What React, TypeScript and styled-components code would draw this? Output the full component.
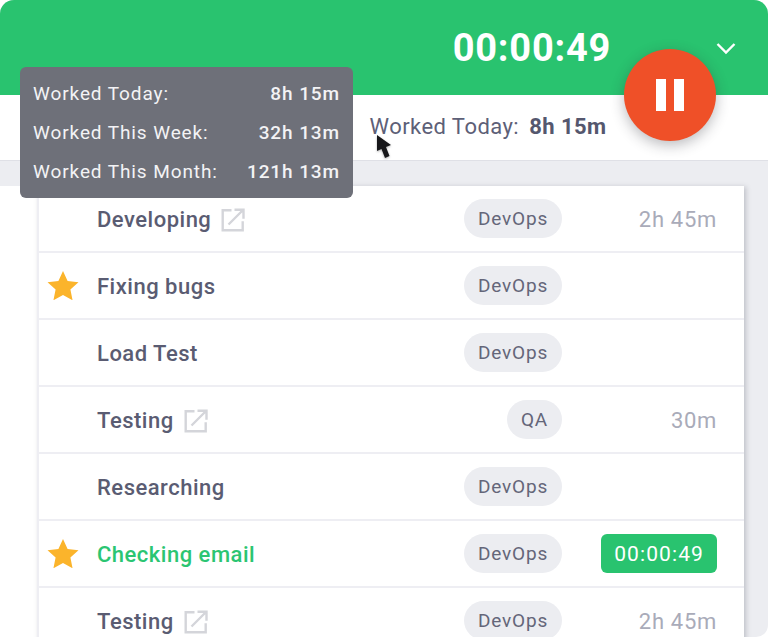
import React from "react";
import styled, { createGlobalStyle } from "styled-components";

const GlobalStyle = createGlobalStyle`
	html, body {
		margin: 0;
		padding: 0;
		background: #fff;
	}
	* {
		box-sizing: border-box;
	}
`;

const Frame = styled.div`
	position: relative;
	width: 768px;
	height: 637px;
	overflow: hidden;
	background: #ecedf1;
	border-radius: 14px 14px 12px 0;
	font-family: Roboto, "Liberation Sans", sans-serif;
	color: #5a5c72;
`;

const Header = styled.header`
	display: flex;
	justify-content: flex-end;
	align-items: flex-start;
	height: 95px;
	padding: 26px 32px 0 0;
	background: #29c36f;
`;

const Clock = styled.div`
	font-size: 38px;
	line-height: 44px;
	font-weight: 700;
	letter-spacing: 0.75px;
	color: #fff;
	margin-right: 105px;
`;

const Chevron = styled.svg`
	width: 20px;
	height: 14px;
	margin-top: 15px;
`;

const SubBar = styled.div`
	height: 66px;
	padding: 18px 0 0 369.500px;
	background: #fff;
	border-bottom: 1px solid #dfe0e6;
	font-size: 22px;
	line-height: 28px;
	letter-spacing: 0.45px;
	color: #5d6077;
`;

const SubValue = styled.b`
	font-weight: 700;
	margin-left: 10px;
	color: #55576e;
`;

const Content = styled.div`
	display: flex;
	margin-top: 25px;
	height: 500px;
`;

const Gutter = styled.div`
	width: 37px;
	background: #fff;
`;

const List = styled.div`
	width: 707px;
	background: #fff;
	border-left: 2px solid #eeeef3;
	box-shadow: 2px 1px 5px rgba(60, 62, 80, 0.25);
`;

const Row = styled.div`
	display: grid;
	grid-template-columns: 58px 1fr auto 155px;
	align-items: center;
	height: 67px;
	padding: 2px 27px 0 0;
	border-bottom: 2px solid #eeeef3;
`;

const StarCell = styled.div`
	display: flex;
	padding: 0 0 3px 8px;
`;

const Name = styled.div<{ $active?: boolean }>`
	display: flex;
	align-items: center;
	gap: 10px;
	font-size: 22px;
	font-weight: 500;
	letter-spacing: 0.5px;
	color: ${(props) => (props.$active ? "#2bc572" : "#5a5c72")};
`;

const Tag = styled.span`
	display: flex;
	align-items: center;
	height: 39px;
	margin-bottom: 2px;
	padding: 0 14px;
	border-radius: 20px;
	background: #ecedf1;
	font-size: 19px;
	letter-spacing: 0.8px;
	color: #646679;
`;

const Time = styled.div`
	justify-self: end;
	font-size: 22px;
	letter-spacing: 0.7px;
	color: #a9abb9;
`;

const TimerBadge = styled.div`
	justify-self: end;
	display: flex;
	align-items: center;
	height: 39px;
	margin-bottom: 2px;
	padding: 0 13px;
	border-radius: 6px;
	background: #29c36f;
	font-size: 21px;
	letter-spacing: 1.1px;
	color: #fff;
`;

const Tooltip = styled.div`
	position: absolute;
	left: 20px;
	top: 67px;
	width: 333px;
	height: 131px;
	padding: 7px 13px 0;
	border-radius: 6px;
	background: #6e7079;
	color: #f3f3f5;
	font-size: 19px;
	letter-spacing: 0.9px;
`;

const TipRow = styled.div`
	display: flex;
	justify-content: space-between;
	height: 39px;
	line-height: 39px;
`;

const TipValue = styled.span`
	font-weight: 500;
`;

const PauseButton = styled.div`
	position: absolute;
	left: 624px;
	top: 49px;
	display: flex;
	justify-content: center;
	align-items: center;
	gap: 8px;
	width: 92px;
	height: 92px;
	border-radius: 50%;
	background: #ef5028;
	box-shadow: 0 4px 14px rgba(40, 40, 50, 0.32);
`;

const PauseBar = styled.span`
	width: 10px;
	height: 32px;
	background: #fff;
`;

const Cursor = styled.svg`
	position: absolute;
	left: 374px;
	top: 133px;
	width: 20px;
	height: 27px;
	filter: drop-shadow(0 1px 1px rgba(0, 0, 0, 0.3));
`;

const Star = () => (
	<svg width="32" height="30" viewBox="0 0 34 32">
		<path
			d="M17 1l4.900 10.600 11.600 1.400-8.600 7.900 2.300 11.400L17 26.600 6.800 32.300l2.300-11.400L.5 13l11.600-1.400z"
			fill="#fbb42b"
		/>
	</svg>
);

const ExternalIcon = () => (
	<svg width="24" height="24" viewBox="0 0 24 24" fill="none" stroke="#d4d5da" strokeWidth="2.400">
		<path d="M10.500 2.200H1.700v20h20v-9" />
		<path d="M7.500 16.500L22 2M13.500 1.700h9v9" />
	</svg>
);

type Task = {
	name: string;
	tag: string;
	time?: string;
	star?: boolean;
	link?: boolean;
	active?: boolean;
};

const tasks: Task[] = [
	{ name: "Developing", tag: "DevOps", time: "2h 45m", link: true },
	{ name: "Fixing bugs", tag: "DevOps", star: true },
	{ name: "Load Test", tag: "DevOps" },
	{ name: "Testing", tag: "QA", time: "30m", link: true },
	{ name: "Researching", tag: "DevOps" },
	{ name: "Checking email", tag: "DevOps", star: true, active: true },
	{ name: "Testing", tag: "DevOps", time: "2h 45m", link: true },
];

const worked = [
	["Worked Today:", "8h 15m"],
	["Worked This Week:", "32h 13m"],
	["Worked This Month:", "121h 13m"],
];

function App() {
	return (
		<Frame>
			<GlobalStyle />
			<Header>
				<Clock>00:00:49</Clock>
				<Chevron viewBox="0 0 20 14" fill="none" stroke="#fff" strokeWidth="2.400">
					<path d="M1.500 3l8.500 8.500L18.500 3" />
				</Chevron>
			</Header>
			<SubBar>
				Worked Today:<SubValue>8h 15m</SubValue>
			</SubBar>
			<Content>
				<Gutter />
				<List>
					{tasks.map((task, i) => (
						<Row key={i}>
							<StarCell>{task.star && <Star />}</StarCell>
							<Name $active={task.active}>
								{task.name}
								{task.link && <ExternalIcon />}
							</Name>
							<Tag>{task.tag}</Tag>
							{task.active ? <TimerBadge>00:00:49</TimerBadge> : <Time>{task.time}</Time>}
						</Row>
					))}
				</List>
			</Content>
			<Tooltip>
				{worked.map(([label, value]) => (
					<TipRow key={label}>
						<span>{label}</span>
						<TipValue>{value}</TipValue>
					</TipRow>
				))}
			</Tooltip>
			<PauseButton>
				<PauseBar />
				<PauseBar />
			</PauseButton>
			<Cursor viewBox="0 0 20 27">
				<path d="M3 2l14 10-5 2 3.500 9-4.500 2-3.500-9L3 18z" fill="#17171a" />
			</Cursor>
		</Frame>
	);
}

export default App;
